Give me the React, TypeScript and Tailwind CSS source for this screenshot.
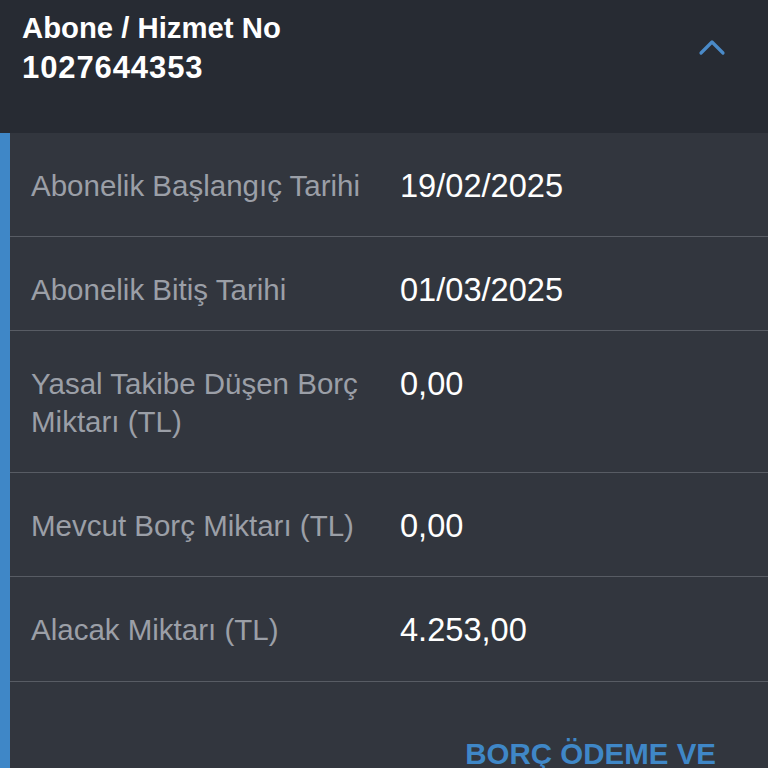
import React from "react";

const rows: { label: string; value: string; h: string }[] = [
  { label: "Abonelik Başlangıç Tarihi", value: "19/02/2025", h: "h-[104px]" },
  { label: "Abonelik Bitiş Tarihi", value: "01/03/2025", h: "h-[94px]" },
  { label: "Yasal Takibe Düşen Borç Miktarı (TL)", value: "0,00", h: "h-[142px]" },
  { label: "Mevcut Borç Miktarı (TL)", value: "0,00", h: "h-[104px]" },
  { label: "Alacak Miktarı (TL)", value: "4.253,00", h: "h-[105px]" },
];

export default function App() {
  return (
    <div
      className="w-[768px] h-[768px] overflow-hidden bg-[#32363e]"
      style={{ fontFamily: '"Liberation Sans", Arial, sans-serif' }}
    >
      <div className="h-[133px] bg-[#272b33] flex justify-between pl-[22px] pr-[42px] pt-[8px]">
        <div className="text-white font-bold leading-[40px]">
          <div className="text-[29.3px]">Abone / Hizmet No</div>
          <div className="text-[31px] tracking-[0.9px]">1027644353</div>
        </div>
        <svg width="28" height="18" viewBox="0 0 28 18" className="mt-[30px]">
          <path d="M3 15 L14 4 L25 15" stroke="#4a8ac8" strokeWidth="3.2" fill="none" strokeLinecap="round" strokeLinejoin="round" />
        </svg>
      </div>
      <div className="flex">
        <div className="w-[10px] bg-[#3f87c7] h-[635px]" />
        <div className="flex-1">
          {rows.map((r) => (
            <div key={r.label} className={`${r.h} flex border-b border-[#585c64] pt-[34px]`}>
              <div className="w-[390px] shrink-0 pl-[21px] pr-[24px] text-[#9b9fa7] text-[29.5px] leading-[38px]">
                {r.label}
              </div>
              <div className="text-white text-[32.6px] leading-[38px]">{r.value}</div>
            </div>
          ))}
          <div className="flex justify-end pr-[52px] pt-[52px]">
            <div className="text-[#3f87c7] font-bold text-[29.5px] leading-[40px] whitespace-nowrap">BORÇ ÖDEME VE</div>
          </div>
        </div>
      </div>
    </div>
  );
}
